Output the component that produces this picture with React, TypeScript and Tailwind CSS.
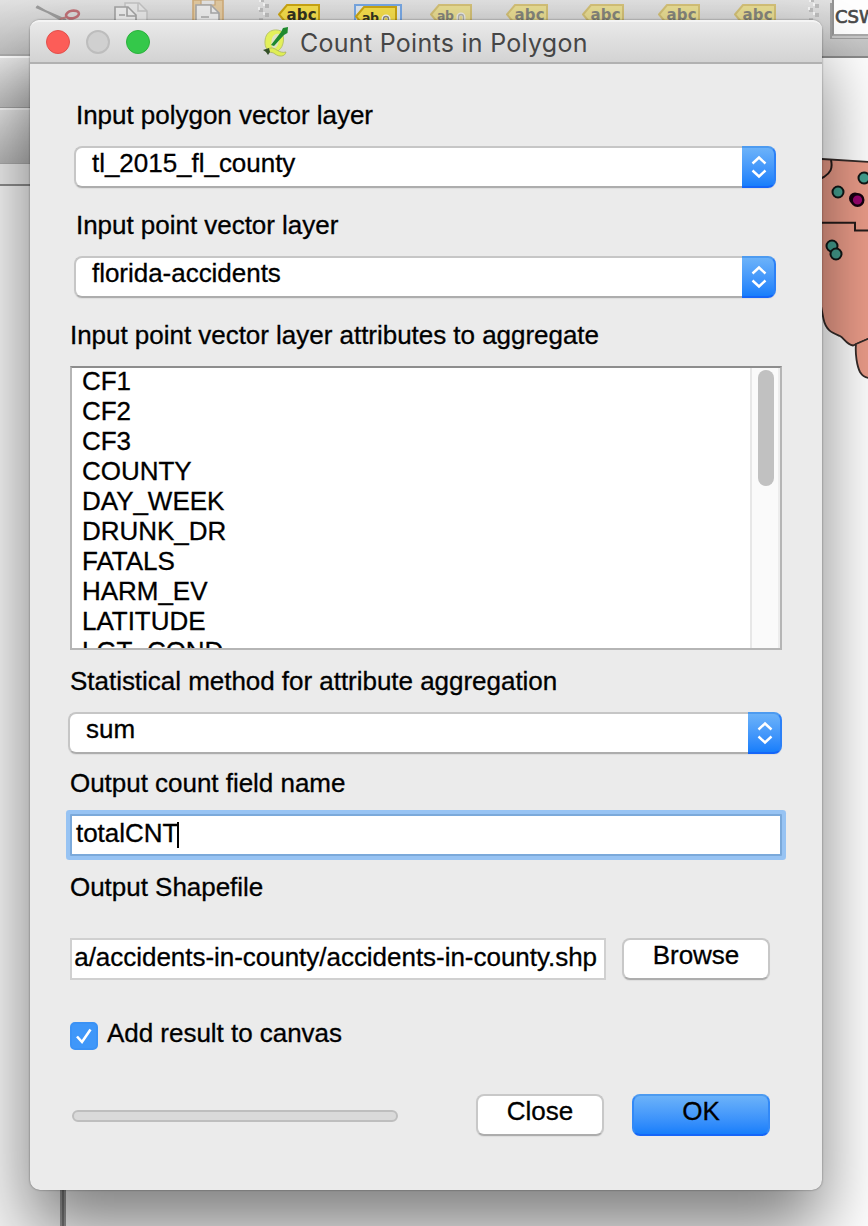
import type { ReactNode } from "react";

const ATTRIBUTES = [
  "CF1",
  "CF2",
  "CF3",
  "COUNTY",
  "DAY_WEEK",
  "DRUNK_DR",
  "FATALS",
  "HARM_EV",
  "LATITUDE",
  "LGT_COND",
];

function TagIcon({ faded = false, text = "abc" }: { faded?: boolean; text?: string }) {
  const small = text !== "abc";
  return (
    <svg width="42" height="24" viewBox="0 0 42 24" className={faded ? "shrink-0 opacity-50" : "shrink-0"}>
      <path d="M1 14.5 9 5H41V24H9Z" fill="#f3dc4b" stroke="#c9a413" strokeWidth="2" />
      <text
        x={small ? 7 : 8.5}
        y="20"
        fontFamily="DejaVu Sans"
        fontWeight="bold"
        fontSize={small ? 12.5 : 15}
        textLength={small ? 17 : 30}
        fill="#33331f"
      >
        {small ? "ab" : text}
      </text>
      {small && <path d="M28 20v-3a3 3 0 0 1 6 0v3" fill="none" stroke="#f7f7f7" strokeWidth="3" />}
      {small && <path d="M28.5 20v-3a2.5 2.5 0 0 1 5 0v3" fill="none" stroke="#8a8a80" strokeWidth="1.3" />}
    </svg>
  );
}

function Grip() {
  return (
    <svg width="12" height="24" viewBox="0 0 12 24" className="shrink-0">
      <g fill="#bcbcbc">
        <rect x="3" y="0" width="3" height="2" />
        <rect x="7" y="4" width="4" height="4" />
        <rect x="1" y="8" width="4" height="4" />
        <rect x="7" y="13" width="4" height="4" />
        <rect x="1" y="18" width="4" height="4" />
      </g>
      <g fill="#f4f4f4">
        <rect x="1" y="0" width="2" height="2" />
        <rect x="5" y="3" width="2" height="3" />
        <rect x="0" y="7" width="2" height="3" />
        <rect x="5" y="12" width="2" height="3" />
      </g>
    </svg>
  );
}

function Desktop() {
  return (
    <div className="absolute inset-0 flex flex-col bg-white">
      <div className="flex h-[58px] shrink-0 overflow-hidden bg-gradient-to-b from-[#e2e2e2] to-[#bdbdbd]">
        <svg width="258" height="22" viewBox="0 0 258 22" className="shrink-0">
          <path d="M36 7 66 20M37 6l24 14" fill="none" stroke="#9c9c9c" strokeWidth="2" />
          <path d="M60 19 67 17" stroke="#bb8080" strokeWidth="2" />
          <ellipse cx="72.500" cy="14.500" rx="6.500" ry="3.800" transform="rotate(-10 72.500 14.500)" fill="none" stroke="#c07076" strokeWidth="2.600" />
          <path d="M125 8V3h14l8 8v12h-8" fill="#e6e6e6" stroke="#c2c2c2" strokeWidth="1.500" />
          <path d="M138 3v8h9" fill="none" stroke="#c2c2c2" strokeWidth="1.500" />
          <path d="M115 24V7h13l8 8v9" fill="#ededed" stroke="#a2a2a2" strokeWidth="1.600" />
          <path d="M127 7v9h9M119 15h6" fill="none" stroke="#a2a2a2" strokeWidth="1.600" />
          <path d="M193 0h30v24h-30z" fill="#e2c9a0" stroke="#d0ac79" strokeWidth="1.600" />
          <path d="M201 0h14v5h-14z" fill="#e4e4e4" stroke="#c8a87a" strokeWidth="1.200" />
          <path d="M196 24V5h15l8 8v11" fill="#ededed" stroke="#a9a9a9" strokeWidth="1.600" />
          <path d="M211 5v8h8M201 17h8" fill="none" stroke="#a9a9a9" strokeWidth="1.600" />
        </svg>
        <Grip />
        <div className="flex shrink-0 gap-[34px] pl-2">
          <TagIcon />
          <div className="-mr-[6px] mt-1 flex h-[28px] w-[48px] shrink-0 justify-center border-2 border-[#76a6e2] bg-[#dde6ee] pr-1">
            <div className="-mt-[4px] shrink-0">
              <TagIcon text="abn" />
            </div>
          </div>
          <TagIcon faded text="abn" />
          <TagIcon faded />
          <TagIcon faded />
          <TagIcon faded />
          <TagIcon faded />
        </div>
        <div className="ml-[32px] shrink-0">
          <Grip />
        </div>
        <div className="ml-[12px] h-[36px] w-[60px] shrink-0 border-2 border-t-0 border-[#949494] border-b-[#a9a9a9] bg-white pt-[5px] pl-px font-['DejaVu_Sans'] text-[18px] leading-6 font-normal text-[#4a4a4a] shadow-[0_2px_0_#c8c8c8,-2px_3px_0_#9f9f9f] [-webkit-text-stroke:0.7px_#4a4a4a]">
          CSW
        </div>
      </div>
      <div className="relative flex min-h-0 flex-1">
        <div className="-mt-[2px] flex w-[60px] shrink-0 flex-col bg-[#f5f5f5]">
          <div className="h-[51px] border-t-2 border-white bg-gradient-to-b from-[#e9e9e9] to-[#bcbcbc] shadow-[0_-2px_0_#adadad]" />
          <div className="mt-px h-[56px] border-t-2 border-b border-t-[#f5f5f5] border-b-[#aaa] bg-gradient-to-b from-[#e3e3e3] to-[#b5b5b5] shadow-[0_-1px_0_#a0a0a0]" />
          <div className="h-[22px] border-b-2 border-[#8c8c8c] bg-[#ececec]" />
        </div>
        <div className="w-[6px] shrink-0 border-x-2 border-[#9a9a9a] bg-[#757575]" />
        <div className="flex-1 bg-white shadow-[0_-2px_0_#8a8a8a]" />
      </div>
      <svg className="absolute top-[140px] left-[800px]" width="68" height="250" viewBox="800 140 68 250">
        <path
          d="M800 159H822L870 162V338L853 345.500C846 344 844 338 840 336C833 333 826 331 823.500 319L821 306 800 300Z"
          fill="#eb9c89"
          stroke="#342a28"
          strokeWidth="1.800"
        />
        <path d="M856 344C855 354 857 366 860 372C863 377 866 378 870 378V338Z" fill="#eb9c89" stroke="#342a28" strokeWidth="1.800" />
        <path d="M831 160C833 169 830 173 824 177L820 179M820 222.700H855V230.500H870" fill="none" stroke="#241b1a" strokeWidth="2" />
        <g fill="#45a090" stroke="#101716" strokeWidth="2">
          <circle cx="838" cy="192" r="5.500" />
          <circle cx="864" cy="178" r="5.500" />
          <circle cx="832" cy="246" r="5.500" />
          <circle cx="836" cy="254" r="5.500" />
        </g>
        <g fill="#98056f" stroke="#16030f" strokeWidth="2.400">
          <circle cx="855" cy="198.500" r="4.800" />
          <circle cx="857.500" cy="200" r="5.800" />
        </g>
      </svg>
    </div>
  );
}

function TitleBar() {
  return (
    <div className="relative flex h-[44px] shrink-0 items-center rounded-t-[9px] border-t-2 border-b-2 border-t-[#f4f4f4] border-b-[#b1b1b1] bg-gradient-to-b from-[#e9e9e9] to-[#d3d3d3] pl-4">
      <div className="flex gap-4">
        <span className="size-6 rounded-full border border-[#e2504c] bg-[#fc5d58]" />
        <span className="size-6 rounded-full border-2 border-[#bdbdbd] bg-[#d0d0d0]" />
        <span className="size-6 rounded-full border border-[#2bb13c] bg-[#34c84a]" />
      </div>
      <svg className="ml-[112px] shrink-0" width="28" height="32" viewBox="0 0 28 32">
        <path d="M19 5C12 2 3.500 5 3 15C2.500 22 6 26 12 26C19 26 23 17 21 9Z" fill="#e3f05a" stroke="#b9c46a" strokeWidth="1" />
        <path d="M17 8C13 7 10 10 9.500 15C9 20 10 23 13 22C16 21 17 16 17 11Z" fill="#dfe2c4" />
        <path d="M9 22C13 21 17 28 24 26C23 31 17 31 13 28C9 25 6 27 4 26C5 23 7 22 9 22Z" fill="#dfee55" stroke="#a9b25c" strokeWidth="0.800" />
        <path d="M9 19 19 6 21 2 26 1 25.500 7 22 9 12 20Z" fill="#1f8a2e" />
        <path d="M1 24 7 22 8 26 6 29 4 26Z" fill="#34502a" />
      </svg>
      <span className="mt-px ml-[10px] font-[Inter] text-[25px] leading-[30px] tracking-[0.28px] whitespace-nowrap text-[#464646]">
        Count Points in Polygon
      </span>
    </div>
  );
}

function Select({ value }: { value: string }) {
  return (
    <div className="flex h-[42px] rounded-[8px] shadow-[0_1px_1px_rgba(0,0,0,0.06)]">
      <div className="flex-1 rounded-l-[8px] border-2 border-r-0 border-[#c6c6c6] border-b-[#adadad] bg-white pl-4">
        {value}
      </div>
      <div className="flex w-[34px] items-center justify-center rounded-r-[8px] border-y-2 border-r-2 border-t-[#4d9bf0] border-r-[#2b80f7] border-b-[#1566f8] bg-gradient-to-b from-[#6bb2f9] to-[#167efb] pl-0.5">
        <svg width="16" height="24" viewBox="0 0 16 24" fill="none" stroke="#fff" strokeWidth="2.400">
          <path d="M1.500 8.500 8 2.500 14.500 8.500M1.500 15.500 8 21.500 14.500 15.500" />
        </svg>
      </div>
    </div>
  );
}

function Button({ children, className }: { children: ReactNode; className: string }) {
  return <button className={`flex h-[42px] items-start justify-center rounded-[8px] border-2 ${className}`}>{children}</button>;
}

const LIGHT = "border-[#c8c8c8] border-b-[#adadad] bg-white shadow-[0_1px_1px_rgba(0,0,0,0.06)]";

export default function App() {
  return (
    <div className="relative h-[1226px] w-[868px] overflow-hidden font-['Liberation_Sans',Arial,sans-serif] text-[26px] leading-[30px] tracking-[-0.03px] whitespace-nowrap text-black">
      <Desktop />
      <div className="relative mt-5 ml-[30px] flex h-[1170px] w-[792px] flex-col rounded-[10px] bg-[#ebebeb] shadow-[0_0_2px_rgba(0,0,0,0.5),0_40px_70px_rgba(0,0,0,0.5)]">
        <TitleBar />
        <div className="flex flex-col px-10 pt-9 [-webkit-text-stroke:0.3px_#000]">
          <div className="mr-[6px] ml-1">
            <div className="pl-[2px]">Input polygon vector layer</div>
            <div className="mt-4">
              <Select value="tl_2015_fl_county" />
            </div>
            <div className="mt-[22px] pl-[2px]">Input point vector layer</div>
            <div className="mt-4">
              <Select value="florida-accidents" />
            </div>
          </div>
          <div className="mt-[22px]">Input point vector layer attributes to aggregate</div>

          <div className="mt-4 flex h-[284px] overflow-hidden border-2 border-[#b5b5b5] border-t-[#8d8d8d] bg-white">
            <ul className="-mt-[2px] flex-1 pl-[10px]">
              {ATTRIBUTES.map((name) => (
                <li key={name}>{name}</li>
              ))}
            </ul>
            <div className="flex w-[30px] justify-center border-r-2 border-l-2 border-r-[#ededed] border-l-[#e7e7e7] bg-[#fafafa] pt-[2px] pl-[2px]">
              <div className="h-[116px] w-4 rounded-full bg-[#c1c1c1]" />
            </div>
          </div>

          <div className="mt-4">Statistical method for attribute aggregation</div>
          <div className="mt-4 -ml-[2px]">
            <Select value="sum" />
          </div>
          <div className="mt-[14px]">Output count field name</div>
          <div className="mt-4 flex h-[42px] rounded-[1px] border-2 border-[#7ba9da] bg-white pt-[2px] pl-1 shadow-[0_0_0_4px_#97c3f3]">
            <span>totalCNT</span>
            <span className="mt-1 -ml-px h-[26px] w-0.5 bg-black" />
          </div>
          <div className="mt-4">Output Shapefile</div>
          <div className="mt-9 flex gap-4">
            <div className="flex h-[42px] w-[536px] justify-end overflow-hidden border-2 border-[#d0d0d0] bg-white pt-[2px] pr-[7px]">
              <span>a/accidents-in-county/accidents-in-county.shp</span>
            </div>
            <Button className={`w-[148px] ${LIGHT}`}>Browse</Button>
          </div>
          <div className="mt-[38px] flex h-[34px] pt-1">
            <span className="flex size-7 items-center justify-center rounded-[5px] border-2 border-[#3b92f5] bg-[#3f97f9]">
              <svg width="20" height="20" viewBox="0 0 20 20" fill="none" stroke="#fff" strokeWidth="2.600">
                <path d="M3 10.500 8 16 16.500 3.500" />
              </svg>
            </span>
            <span className="-mt-1 ml-[9px]">Add result to canvas</span>
          </div>
          <div className="mt-[42px] flex">
            <div className="mt-4 ml-0.5 h-3 w-[326px] rounded-full border-2 border-[#bebebe] bg-[#dadada]" />
            <Button className={`ml-[78px] w-[128px] ${LIGHT}`}>Close</Button>
            <Button className="ml-7 w-[138px] border-x-[#3289f7] border-t-[#4d9bf0] border-b-[#1566f8] bg-gradient-to-b from-[#6bb2f9] to-[#167efb]">
              OK
            </Button>
          </div>
        </div>
      </div>
    </div>
  );
}
